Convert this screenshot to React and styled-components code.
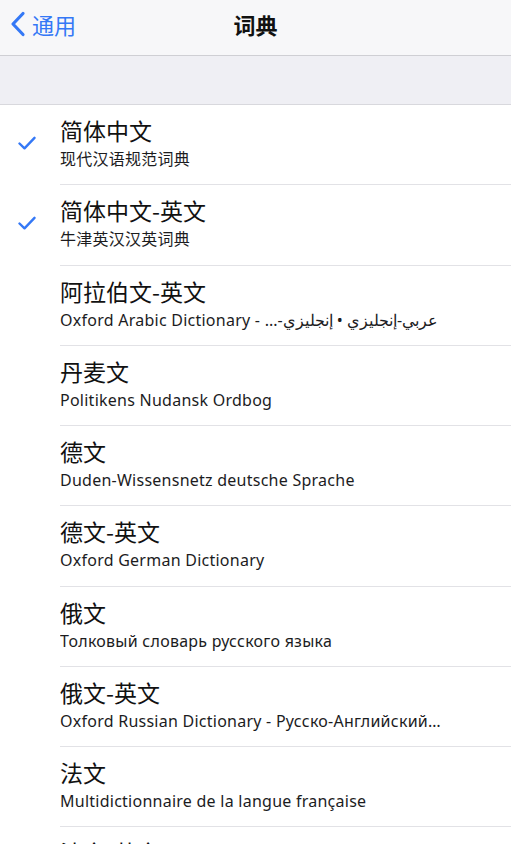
import React from "react";
import styled, { createGlobalStyle } from "styled-components";

const GlobalStyle = createGlobalStyle`
  html, body {
    margin: 0;
    padding: 0;
    background: #ffffff;
  }
  body {
    font-family: "Noto Sans", "Noto Sans CJK SC", sans-serif;
    -webkit-font-smoothing: antialiased;
  }
`;

const blue = "#3478f6";

const Screen = styled.div`
  width: 511px;
  height: 844px;
  overflow: hidden;
  background: #ffffff;
`;

const NavBar = styled.div`
  height: 56px;
  box-sizing: border-box;
  padding-bottom: 7px;
  display: grid;
  grid-template-columns: 1fr auto 1fr;
  align-items: center;
  background: #f7f7f9;
  border-bottom: 1px solid #cfcfd4;
`;

const BackButton = styled.div`
  display: flex;
  align-items: center;
  gap: 6px;
  padding-left: 10px;
  color: ${blue};
  font-family: "Noto Sans CJK SC", sans-serif;
  font-size: 22px;
  line-height: 28px;
`;

const Title = styled.div`
  font-family: "Noto Sans CJK SC", sans-serif;
  font-size: 22px;
  line-height: 28px;
  font-weight: 700;
  color: #111;
`;

const SectionGap = styled.div`
  height: 48px;
  background: #efeff4;
  border-bottom: 1px solid #d8d8dd;
`;

const Row = styled.div`
  display: flex;
  height: 80.25px;
`;

const CheckCell = styled.div`
  width: 60px;
  flex-shrink: 0;
  display: flex;
  align-items: center;
  padding-left: 18px;
  box-sizing: border-box;
  padding-bottom: 4px;
`;

const Body = styled.div`
  flex: 1;
  min-width: 0;
  padding-top: 11px;
  border-bottom: 1px solid #e2e2e6;
  box-sizing: border-box;
`;

const Name = styled.div`
  font-family: "Noto Sans CJK SC", sans-serif;
  font-size: 23px;
  line-height: 28px;
  color: #111;
`;

const Sub = styled.div`
  margin-top: 5px;
  font-family: "Noto Sans", "Noto Sans CJK SC", sans-serif;
  font-size: 16px;
  letter-spacing: 0.25px;
  line-height: 20px;
  color: #1c1c1e;
  white-space: nowrap;
  overflow: hidden;
  padding-right: 40px;
`;

const Chevron = () => (
  <svg width="16" height="26" viewBox="0 0 16 26">
    <path
      d="M13 2.5L3 13l10 10.5"
      fill="none"
      stroke={blue}
      strokeWidth="3.2"
      strokeLinecap="round"
      strokeLinejoin="round"
    />
  </svg>
);

const Check = () => (
  <svg width="18" height="14" viewBox="0 0 18 14">
    <path
      d="M1.5 7.5l5 4.8L16.5 1.8"
      fill="none"
      stroke={blue}
      strokeWidth="2.4"
      strokeLinecap="round"
      strokeLinejoin="round"
    />
  </svg>
);

const dictionaries = [
  { name: "简体中文", sub: "现代汉语规范词典", checked: true },
  { name: "简体中文-英文", sub: "牛津英汉汉英词典", checked: true },
  {
    name: "阿拉伯文-英文",
    sub: (
      <>
        Oxford Arabic Dictionary - <bdi dir="rtl">عربي-إنجليزي • إنجليزي-...</bdi>
      </>
    ),
  },
  { name: "丹麦文", sub: "Politikens Nudansk Ordbog" },
  { name: "德文", sub: "Duden-Wissensnetz deutsche Sprache" },
  { name: "德文-英文", sub: "Oxford German Dictionary" },
  { name: "俄文", sub: "Толковый словарь русского языка" },
  { name: "俄文-英文", sub: "Oxford Russian Dictionary - Русско-Английский…" },
  { name: "法文", sub: "Multidictionnaire de la langue française" },
  { name: "法文-英文", sub: "Oxford-Hachette French Dictionary" },
];

export default function App() {
  return (
    <Screen>
      <GlobalStyle />
      <NavBar>
        <BackButton>
          <Chevron />
          <span>通用</span>
        </BackButton>
        <Title>词典</Title>
        <div />
      </NavBar>
      <SectionGap />
      {dictionaries.map((d) => (
        <Row key={d.name}>
          <CheckCell>{d.checked && <Check />}</CheckCell>
          <Body>
            <Name>{d.name}</Name>
            <Sub>{d.sub}</Sub>
          </Body>
        </Row>
      ))}
    </Screen>
  );
}
